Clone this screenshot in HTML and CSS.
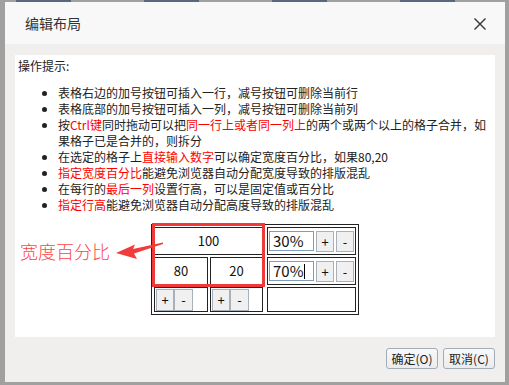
FILE: index.html
```html
<!DOCTYPE html>
<html lang="zh-CN">
    <head>
        <meta charset="UTF-8">
        <title>编辑布局</title>
        <link rel="stylesheet" href="styles.css">
    </head>

    <body>
        <div class="bg-strip">
            <span></span><span></span><span></span><span></span>
        </div>

        <div class="dialog">
            <div class="dialog-head">
                <span class="dialog-title">编辑布局</span>
                <svg class="close" width="12" height="12" viewBox="0 0 12 12">
                    <path d="M0.5 0.5 L11.5 11.5 M11.5 0.5 L0.5 11.5" stroke="#333" stroke-width="1.4" fill="none"/>
                </svg>
            </div>

            <div class="dialog-body">
                <div class="panel">
                    <p class="tip-title">操作提示:</p>
                    <ul class="tips">
                        <li>表格右边的加号按钮可插入一行，减号按钮可删除当前行</li>
                        <li>表格底部的加号按钮可插入一列，减号按钮可删除当前列</li>
                        <li>按<em>Ctrl键</em>同时拖动可以把<em>同一行上或者同一列上</em><span>的两个或两个以上的格子合并，如</span><span class="wrap">果格子已是合并的，则拆分</span></li>
                        <li>在选定的格子上<em>直接输入数字</em>可以确定宽度百分比，如果80,20</li>
                        <li><em>指定宽度百分比</em>能避免浏览器自动分配宽度导致的排版混乱</li>
                        <li>在每行的<em>最后一列</em>设置行高，可以是固定值或百分比</li>
                        <li><em>指定行高</em>能避免浏览器自动分配高度导致的排版混乱</li>
                    </ul>

                    <div class="layout-grid">
                        <div class="cell wide">100</div>
                        <div class="cell ctrl">
                            <span class="field">30%</span>
                            <button class="mini">+</button>
                            <button class="mini">-</button>
                        </div>

                        <div class="cell">80</div>
                        <div class="cell">20</div>
                        <div class="cell ctrl">
                            <span class="field">70%<i class="caret"></i></span>
                            <button class="mini">+</button>
                            <button class="mini">-</button>
                        </div>

                        <div class="cell col-ctrl">
                            <button class="mini tall">+</button><button class="mini tall">-</button>
                        </div>
                        <div class="cell col-ctrl">
                            <button class="mini tall">+</button><button class="mini tall">-</button>
                        </div>
                        <div class="cell ctrl"></div>
                    </div>
                </div>

                <div class="dialog-foot">
                    <button class="foot-button">确定(O)</button>
                    <button class="foot-button">取消(C)</button>
                </div>
            </div>
        </div>

        <!-- annotation drawn over the screenshot -->
        <div class="note-box"></div>
        <div class="note">宽度百分比</div>
        <svg class="note-arrow" width="60" height="28" viewBox="0 0 60 28">
            <polygon points="6,17 25,8.5 23,13 53,6.5 53,8 24,17.5 27,23" fill="#f23c3c"/>
        </svg>
    </body>
</html>
```

FILE: styles.css
```css
body {
    margin: 0;
    width: 509px;
    height: 385px;
    position: relative;
    overflow: hidden;
    background-color: #a0a0a0;
    font-family: "Noto Sans CJK SC", "Liberation Sans", sans-serif;
    color: #222;
}

.bg-strip {
    display: flex;
    gap: 73px;
    height: 2px;
    padding-left: 16px;
}

.bg-strip span {
    width: 55px;
    background-color: #5a6680;
}

.dialog {
    display: flex;
    flex-direction: column;
    margin-left: 5px;
    width: 500px;
    height: 380px;
    background-color: #f0efed;
}

.dialog-head {
    display: flex;
    justify-content: space-between;
    align-items: center;
    height: 42px;
    padding: 0 19px 0 20px;
    background-color: #f8f8f8;
}

.dialog-title {
    font-size: 14px;
    color: #333;
}

.close {
    margin-top: 1px;
}

.dialog-body {
    padding: 11px 10px 0;
}

.panel {
    height: 282px;
    box-sizing: border-box;
    padding: 3px;
    background-color: #fff;
    font-size: 12px;
    line-height: 16px;
}

.tip-title {
    margin: 0;
}

.tips {
    margin: 11px 0 0;
    padding-left: 40px;
    line-height: 16px;
}

.tips em {
    display: inline-block;
    font-style: normal;
    color: #ff0000;
}

.tips .wrap {
    display: block;
}

.layout-grid {
    display: grid;
    grid-template-columns: 54px 53px 91px;
    grid-template-rows: 28px 28px 25px;
    gap: 2px;
    width: max-content;
    margin: 11px auto 0;
    padding: 2px;
    border: 1px solid #222;
}

.cell {
    display: flex;
    justify-content: center;
    align-items: center;
    border: 1px solid #222;
    font-size: 13px;
    color: #111;
}

.cell.wide {
    grid-column: span 2;
}

.cell.ctrl {
    margin-left: 2px;
    justify-content: flex-start;
    padding-left: 1px;
    gap: 1px;
}

.cell.col-ctrl {
    justify-content: flex-start;
    padding-left: 1px;
}

.field {
    display: flex;
    align-items: center;
    box-sizing: border-box;
    width: 45px;
    height: 20px;
    padding-left: 3px;
    border: 1px solid #7f9db9;
    font-size: 15px;
    color: #111;
}

.caret {
    width: 1px;
    height: 15px;
    margin-left: 1px;
    background-color: #000;
}

.mini {
    box-sizing: border-box;
    width: 18px;
    height: 21px;
    margin-left: 1px;
    padding: 0;
    border: 1px solid #a8b0ba;
    background-color: #f0f0f0;
    font-family: "Noto Sans CJK SC", sans-serif;
    font-size: 13px;
    line-height: 17px;
    color: #111;
}

.mini.tall {
    height: 22px;
    margin-left: 0;
}

.mini.tall + .mini.tall {
    width: 19px;
}

.dialog-foot {
    display: flex;
    justify-content: flex-end;
    gap: 5px;
    padding-top: 11px;
}

.foot-button {
    width: 52px;
    height: 21px;
    padding: 0;
    border: 1px solid #a3abb7;
    border-radius: 3px;
    background: linear-gradient(#f8f8f8, #ececec);
    font-family: "Noto Sans CJK SC", sans-serif;
    font-size: 12px;
    line-height: 18px;
    color: #222;
}

.note-box {
    position: absolute;
    left: 152px;
    top: 223px;
    width: 113px;
    height: 64px;
    box-sizing: border-box;
    border: 3px solid #f03a3a;
}

.note {
    position: absolute;
    left: 20px;
    top: 241px;
    font-size: 18px;
    line-height: 20px;
    font-weight: 300;
    color: #ff4444;
}

.note-arrow {
    position: absolute;
    left: 110px;
    top: 236px;
}
```
